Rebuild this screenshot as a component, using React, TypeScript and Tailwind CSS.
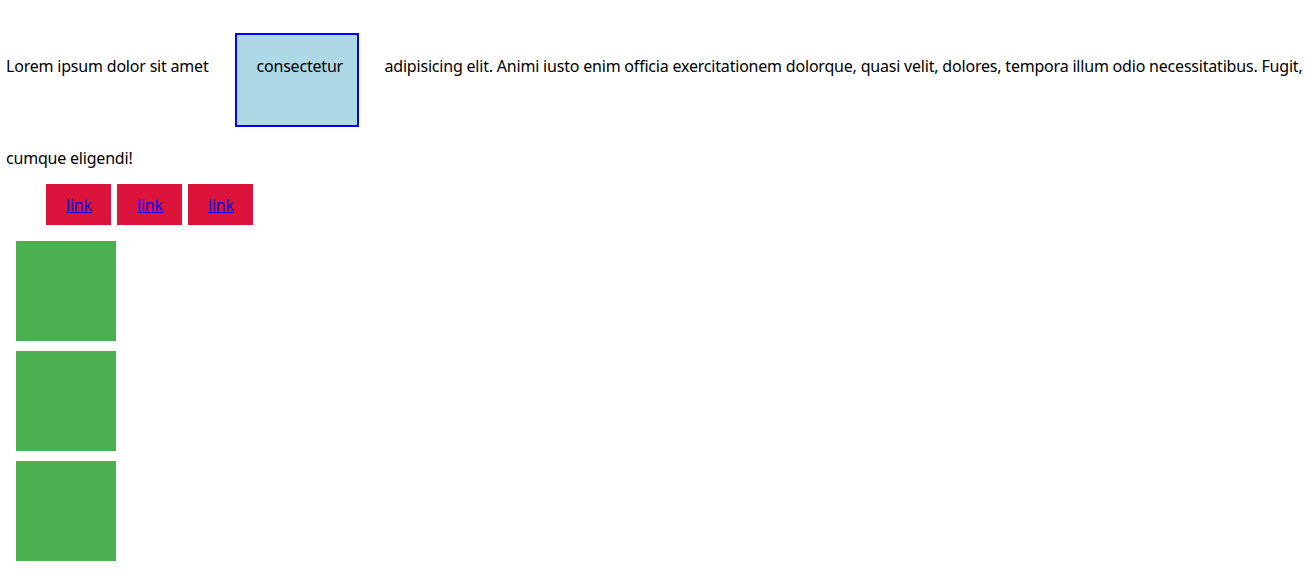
import React from "react";

export default function App() {
  return (
    <div className="min-h-screen bg-white pl-[6px] text-[16px] leading-[21px] tracking-[-0.2px] text-black" style={{ fontFamily: '"Noto Sans", "Noto Sans CJK KR", sans-serif' }}>
      <div className="flex items-baseline whitespace-nowrap pt-[13px]">
        <span>Lorem ipsum dolor sit amet</span>
        <span className="mx-[26px] my-[20px] box-border h-[94px] w-[124px] shrink-0 border-2 border-[#0000ff] bg-[#add8e6] pl-[20px] pt-[21px]">consectetur</span>
        <span>adipisicing elit. Animi iusto enim officia exercitationem dolorque, quasi velit, dolores, tempora illum odio necessitatibus. Fugit,</span>
      </div>
      <div className="pt-[1px]">cumque eligendi!</div>
      <ul className="mt-[15px] mb-[16px] flex gap-[6px] pl-[40px]">
        <li className="box-border h-[41px] w-[65px] bg-[#dc143c] pl-[20px] pt-[11px]">
          <a href="#" className="text-[#0000ee] underline">link</a>
        </li>
        <li className="box-border h-[41px] w-[65px] bg-[#dc143c] pl-[20px] pt-[11px]">
          <a href="#" className="text-[#0000ee] underline">link</a>
        </li>
        <li className="box-border h-[41px] w-[65px] bg-[#dc143c] pl-[20px] pt-[11px]">
          <a href="#" className="text-[#0000ee] underline">link</a>
        </li>
      </ul>
      <div className="flex flex-col gap-[10px] pl-[10px]">
        <div className="h-[100px] w-[100px] bg-[#4caf50]" />
        <div className="h-[100px] w-[100px] bg-[#4caf50]" />
        <div className="h-[100px] w-[100px] bg-[#4caf50]" />
      </div>
    </div>
  );
}
